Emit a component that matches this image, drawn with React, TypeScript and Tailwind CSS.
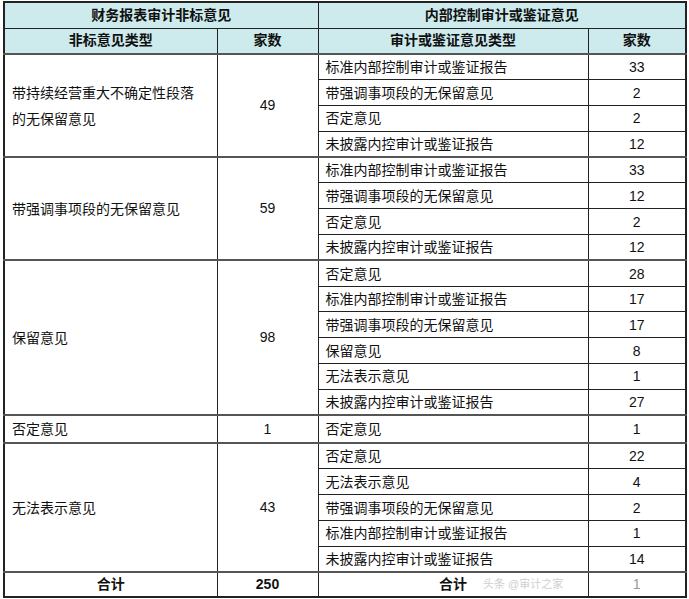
type Row = [string, number];
type Group = { label: string[]; n: number; rows: Row[] };

const groups: Group[] = [
  {
    label: ['带持续经营重大不确定性段落', '的无保留意见'],
    n: 49,
    rows: [
      ['标准内部控制审计或鉴证报告', 33],
      ['带强调事项段的无保留意见', 2],
      ['否定意见', 2],
      ['未披露内控审计或鉴证报告', 12],
    ],
  },
  {
    label: ['带强调事项段的无保留意见'],
    n: 59,
    rows: [
      ['标准内部控制审计或鉴证报告', 33],
      ['带强调事项段的无保留意见', 12],
      ['否定意见', 2],
      ['未披露内控审计或鉴证报告', 12],
    ],
  },
  {
    label: ['保留意见'],
    n: 98,
    rows: [
      ['否定意见', 28],
      ['标准内部控制审计或鉴证报告', 17],
      ['带强调事项段的无保留意见', 17],
      ['保留意见', 8],
      ['无法表示意见', 1],
      ['未披露内控审计或鉴证报告', 27],
    ],
  },
  {
    label: ['否定意见'],
    n: 1,
    rows: [['否定意见', 1]],
  },
  {
    label: ['无法表示意见'],
    n: 43,
    rows: [
      ['否定意见', 22],
      ['无法表示意见', 4],
      ['带强调事项段的无保留意见', 2],
      ['标准内部控制审计或鉴证报告', 1],
      ['未披露内控审计或鉴证报告', 14],
    ],
  },
];

const cell = 'border border-[#222] p-0';
const head = 'border border-[#222] bg-[#cdeaed] font-bold text-center p-0';

export default function App() {
  return (
    <div className="bg-white min-h-[599px] pt-px pl-[3px] font-['Liberation_Sans','Noto_Sans_CJK_SC',sans-serif] text-[14px] text-[#111]">
      <table className="border-collapse table-fixed w-[682px] border-2 border-[#222]">
        <colgroup>
          <col className="w-[213px]" />
          <col className="w-[101px]" />
          <col className="w-[270px]" />
          <col className="w-[98px]" />
        </colgroup>
        <thead>
          <tr className="h-[26px]">
            <th colSpan={2} className={head}>财务报表审计非标意见</th>
            <th colSpan={2} className={head}>内部控制审计或鉴证意见</th>
          </tr>
          <tr className="h-[26px]">
            <th className={`${head} border-b-2 border-b-[#555]`}>非标意见类型</th>
            <th className={`${head} border-b-2 border-b-[#555]`}>家数</th>
            <th className={`${head} border-b-2 border-b-[#555]`}>审计或鉴证意见类型</th>
            <th className={`${head} border-b-2 border-b-[#555]`}>家数</th>
          </tr>
        </thead>
        <tbody>
          {groups.map((g, gi) =>
            g.rows.map((r, ri) => {
              const sep = ri === 0 && gi > 0 ? 'border-t-2 border-t-[#555]' : '';
              return (
                <tr key={`${gi}-${ri}`} className="h-[25.8px]">
                  {ri === 0 && (
                    <>
                      <td rowSpan={g.rows.length} className={`${cell} ${sep} pl-[7px] leading-[26px]`}>
                        {g.label.map((l) => (
                          <div key={l}>{l}</div>
                        ))}
                      </td>
                      <td rowSpan={g.rows.length} className={`${cell} ${sep} text-center`}>
                        {g.n}
                      </td>
                    </>
                  )}
                  <td className={`${cell} ${sep} pl-[7px] leading-[24px]`}>{r[0]}</td>
                  <td className={`${cell} ${sep} text-center leading-[24px]`}>{r[1]}</td>
                </tr>
              );
            })
          )}
          <tr className="h-[25px] font-bold">
            <td className={`${cell} border-t-2 border-t-[#555] text-center`}>合计</td>
            <td className={`${cell} border-t-2 border-t-[#555] text-center`}>250</td>
            <td className={`${cell} border-t-2 border-t-[#555] text-center`}>
              <span className="relative">
                合计
                <span className="absolute left-[44px] top-0 whitespace-nowrap text-[11px] font-normal text-[#cfcfcf]">
                  头条 @审计之家
                </span>
              </span>
            </td>
            <td className={`${cell} border-t-2 border-t-[#555] text-center text-[#999] font-normal`}>
              1
            </td>
          </tr>
        </tbody>
      </table>
    </div>
  );
}
